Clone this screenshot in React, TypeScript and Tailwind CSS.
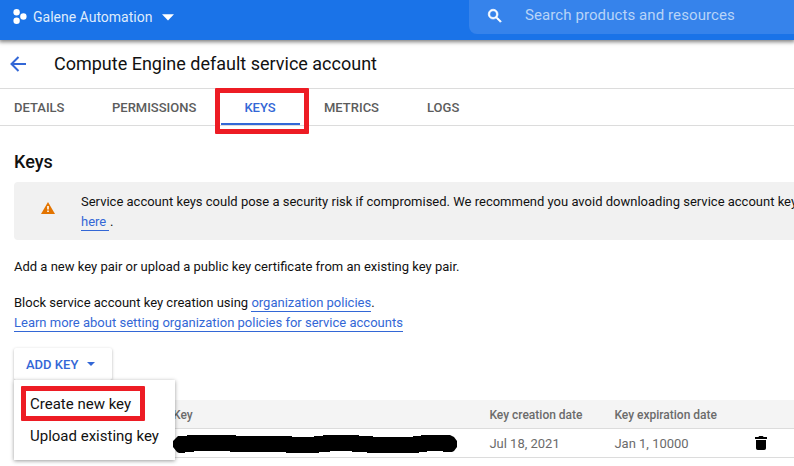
import React from "react";

const tabs = [
  { label: "DETAILS", width: "w-[98px]" },
  { label: "PERMISSIONS", width: "w-[133px]" },
  { label: "KEYS", width: "w-[79px]", active: true },
  { label: "METRICS", width: "w-[103px]" },
  { label: "LOGS", width: "w-[80px]" },
];

function TopBar() {
  return (
    <header className="relative z-10 flex h-10 items-start bg-[#1a73e8] shadow-[0_1px_4px_1px_rgba(0,0,0,0.5)]">
      <div className="flex h-[34px] w-[469px] items-center pl-[13px]">
        <svg width="14" height="15" viewBox="0 0 14 15" className="mt-[-2px]" fill="#fff">
          <circle cx="3.6" cy="3.3" r="3.2" />
          <circle cx="3.6" cy="11.7" r="3.2" />
          <circle cx="10.4" cy="7.5" r="3.2" />
        </svg>
        <span className="ml-[6px] w-[119px] whitespace-nowrap text-[14px] leading-[34px] text-[#dfebfc]">Galene Automation</span>
        <svg width="12" height="7" viewBox="0 0 12 7" className="ml-[10px]" fill="#fff">
          <path d="M0 0.3h12l-6 6.2z" />
        </svg>
      </div>
      <div className="flex h-[34px] flex-1 items-start rounded-bl-lg bg-[#3683eb] pl-[17px]">
        <svg width="18" height="18" viewBox="0 0 24 24" className="mt-[7px]" fill="#fff" stroke="#fff" strokeWidth="0.9">
          <path d="M15.5 14h-.79l-.28-.27A6.47 6.47 0 0 0 16 9.5 6.5 6.5 0 1 0 9.5 16c1.61 0 3.09-.59 4.23-1.57l.27.28v.79l5 4.99L20.49 19l-4.99-5zm-6 0C7.01 14 5 11.99 5 9.5S7.01 5 9.5 5 14 7.01 14 9.5 11.99 14 9.5 14z" />
        </svg>
        <span className="ml-[21px] text-[15px] leading-[30px] tracking-[0.09px] text-[#b8d4f8]">
          Search products and resources
        </span>
      </div>
    </header>
  );
}

function Tabs() {
  return (
    <nav className="relative flex h-[37px] border-b border-[#dcdcdc]">
      <div className="ml-[-10px] flex">
        {tabs.map((t) => (
          <div
            key={t.label}
            className={`${t.width} h-9 shrink-0 text-[13px] font-medium leading-[37px] ${
              t.active ? "border-b-2 border-[#3367d6] pl-[23.4px] text-[#3367d6]" : "pl-6 text-[#5c5c5c]"
            }`}
          >
            {t.label}
          </div>
        ))}
      </div>
      <div className="absolute left-[215px] top-[-1px] h-[46px] w-[94px] rounded-[1px] border-[5px] border-[#ed1c24]" />
    </nav>
  );
}

function AddKey() {
  return (
    <div className="relative mt-[15px] h-8 w-[98px]">
      <button className="flex h-8 w-[98px] items-center rounded-[2px] bg-white pl-3 pt-px text-[13px] font-medium text-[#3367d6] shadow-[0_1px_3px_rgba(0,0,0,0.3)]">
        ADD KEY
        <svg width="8" height="4" viewBox="0 0 8 4" className="mb-px ml-[9px]" fill="#3367d6">
          <path d="M0 0h8l-4 4z" />
        </svg>
      </button>
      <div className="absolute left-0 top-8 z-10 h-20 w-[161px] bg-white pl-4 pt-2 text-[15px] text-[#111] shadow-[0_1px_4px_rgba(0,0,0,0.4)]">
        <div className="h-8 whitespace-nowrap leading-8">Create new key</div>
        <div className="h-8 whitespace-nowrap leading-8">Upload existing key</div>
        <div className="absolute left-[7px] top-[6px] h-[35px] w-[124px] rounded-[1px] border-[5px] border-[#ed1c24]" />
      </div>
    </div>
  );
}

function KeysTable() {
  return (
    <div className="ml-[14px] mt-5 text-[13px] text-[#6b6b6b]">
      <div className="flex h-[29px] border-b border-[#dcdcdc] bg-[#f4f4f4] pl-[159px] text-[12px] font-medium leading-[30px]">
        <span className="w-[316.4px]">Key</span>
        <span className="w-[125px] whitespace-nowrap">Key creation date</span>
        <span className="whitespace-nowrap">Key expiration date</span>
      </div>
      <div className="flex h-[29px] border-b border-[#dcdcdc] pl-[159px] leading-[29px]">
        <svg width="285" height="20" viewBox="0 0 285 20" className="relative z-20 mr-[31.4px] mt-[5px] shrink-0">
          <path
            d="M5 2H14V1H63V2H119V3H141V2H150V1H186V2H200V3H240V2H248V1H277L281 3L284 7V13L281 17L279 18H270V17H254V18H246V19H194V18H179V17H157V18H146V19H113V18H57V17H21V18H12V19H6L4 18L0 13V7L3 4Z"
            fill="#000"
          />
        </svg>
        <span className="w-[125px]">Jul 18, 2021</span>
        <span className="w-[140.6px]">Jan 1, 10000</span>
        <svg width="12" height="14" viewBox="0 0 12 14" className="mt-[7px]" fill="#000">
          <path d="M0 1h3.3L4.3 0h3.4l1 1H12v2H0zM1 4h10v8.2a1.8 1.8 0 0 1-1.8 1.8H2.8A1.8 1.8 0 0 1 1 12.2z" />
        </svg>
      </div>
    </div>
  );
}

export default function App() {
  return (
    <div className="h-[466px] w-[794px] overflow-hidden bg-white font-[Roboto,sans-serif] text-[13px] text-[#111]">
      <TopBar />
      <div className="flex h-[49px] items-center border-b border-[#dcdcdc] pl-[10px]">
        <svg width="16" height="16" viewBox="0 0 16 16" fill="none" stroke="#3367d6" strokeWidth="2">
          <path d="M16 8H1.5M8.5 1L1.5 8l7 7" />
        </svg>
        <h1 className="mb-0.5 ml-7 text-[18px]">Compute Engine default service account</h1>
      </div>
      <Tabs />
      <main>
        <div className="pl-[14px]">
          <h2 className="mt-6 text-[18px] font-medium leading-6">Keys</h2>
          <div className="mt-2 flex h-[58px] rounded-l-[4px] bg-[#f1f1f1] pl-[27px] pt-[10px]">
            <svg width="14" height="12" viewBox="0 0 14 12" className="mt-[10px] shrink-0">
              <path d="M7 0l7 12H0z" fill="#e37400" />
              <path d="M6.2 4h1.6v3.5H6.2zM6.2 8.6h1.6v1.5H6.2z" fill="#fff" />
            </svg>
            <p className="ml-[26px] whitespace-nowrap leading-5">
              Service account keys could pose a security risk if compromised. We recommend you avoid downloading service account key
              <br />
              <a className="mr-px inline-block h-[19px] w-7 border-b border-[#3367d6] text-[#3367d6]">here</a>.
            </p>
          </div>
          <p className="mt-[17px] leading-5">Add a new key pair or upload a public key certificate from an existing key pair.</p>
          <p className="mt-4 leading-5">
            Block service account key creation using{" "}
            <a className="inline-block h-[19px] border-b border-[#3367d6] text-[#3367d6]">organization policies</a>.
          </p>
          <p className="leading-5">
            <a className="inline-block h-[19px] border-b border-[#3367d6] text-[#3367d6]">
              Learn more about setting organization policies for service accounts
            </a>
          </p>
          <AddKey />
        </div>
        <KeysTable />
      </main>
    </div>
  );
}
